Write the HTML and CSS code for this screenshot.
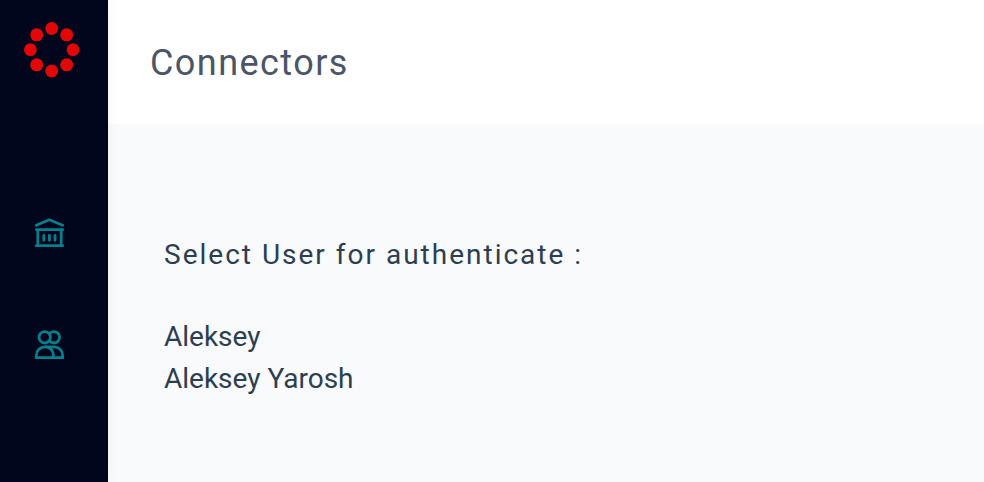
FILE: index.html
```html
<!DOCTYPE html>
<html lang="en">
<head>
<meta charset="utf-8">
<title>Connectors</title>
<link rel="stylesheet" href="styles.css">
</head>
<body>
<div class="app">
  <nav class="sidebar">
    <svg class="logo" viewBox="0 0 56 56" fill="#e30606">
      <circle cx="27.7" cy="6.5" r="6.4"/><circle cx="42.7" cy="12.8" r="6.5"/><circle cx="49" cy="27.7" r="6.4"/><circle cx="42.7" cy="42.8" r="6.5"/><circle cx="27.7" cy="49" r="6.4"/><circle cx="12.7" cy="42.8" r="6.5"/><circle cx="6.4" cy="27.7" r="6.4"/><circle cx="12.7" cy="12.8" r="6.5"/>
    </svg>
    <svg class="icon bank" viewBox="0 0 30 30" fill="none" stroke="currentColor" stroke-width="2.8" stroke-linecap="round" stroke-linejoin="round">
      <path d="M2.2 7.3 L15.4 1.8 L28.6 7.3"/><path d="M2.3 11.6H28.7M2.3 27.7H28.7M3.8 12V27.5M27.2 12V27.5M9.8 17.3V22.3M15.4 17.3V22.3M21 17.3V22.3"/>
    </svg>
    <svg class="icon users" viewBox="0 0 30 30" fill="none" stroke="currentColor" stroke-width="2.8">
      <circle cx="10.7" cy="7.3" r="5.7"/><path d="M15.3 3.93A5.7 5.7 0 1 1 15.3 10.67"/><path d="M2.3 27.6V25.4A8.6 8.6 0 0 1 19.5 25.4V27.6ZM19.5 27.6H28.6V25.4A8.6 8.6 0 0 0 20 16.8H11"/>
    </svg>
  </nav>
  <div class="page">
    <header class="header"><h1 class="title">Connectors</h1></header>
    <main class="content">
      <h2 class="prompt">Select User for authenticate :</h2>
      <ul class="users-list"><li>Aleksey</li><li>Aleksey Yarosh</li></ul>
    </main>
  </div>
</div>
</body>
</html>
```
FILE: styles.css
```css
* { box-sizing: border-box; }
body { margin: 0; font-family: Roboto, sans-serif; color: #2c3e50; }
.app { display: flex; height: 482px; overflow: hidden; }
.sidebar { position: relative; z-index: 1; width: 108px; flex: none; background: #01061c; color: #047f8b; box-shadow: 0 0 12px rgba(0, 0, 0, 0.05); }
.logo { display: block; width: 56px; height: 56px; margin: 22px 0 0 24px; }
.icon { display: block; width: 30px; height: 30px; margin-left: 34px; }
.bank { margin-top: 140px; }
.users { margin-top: 82px; }
.page { flex: 1; display: flex; flex-direction: column; background: #f9fafc; }
.header { height: 124px; background: #fff; padding: 39px 42px; }
.title { margin: 0; font-size: 36px; line-height: 48px; font-weight: 400; letter-spacing: 1.44px; color: #4a5568; }
.content { padding: 110px 56px; }
.prompt { margin: 0; font-size: 28px; line-height: 42px; font-weight: 400; letter-spacing: 2px; }
.users-list { margin: 40px 0 0; padding: 0; list-style: none; font-size: 28px; line-height: 42px; }
```
